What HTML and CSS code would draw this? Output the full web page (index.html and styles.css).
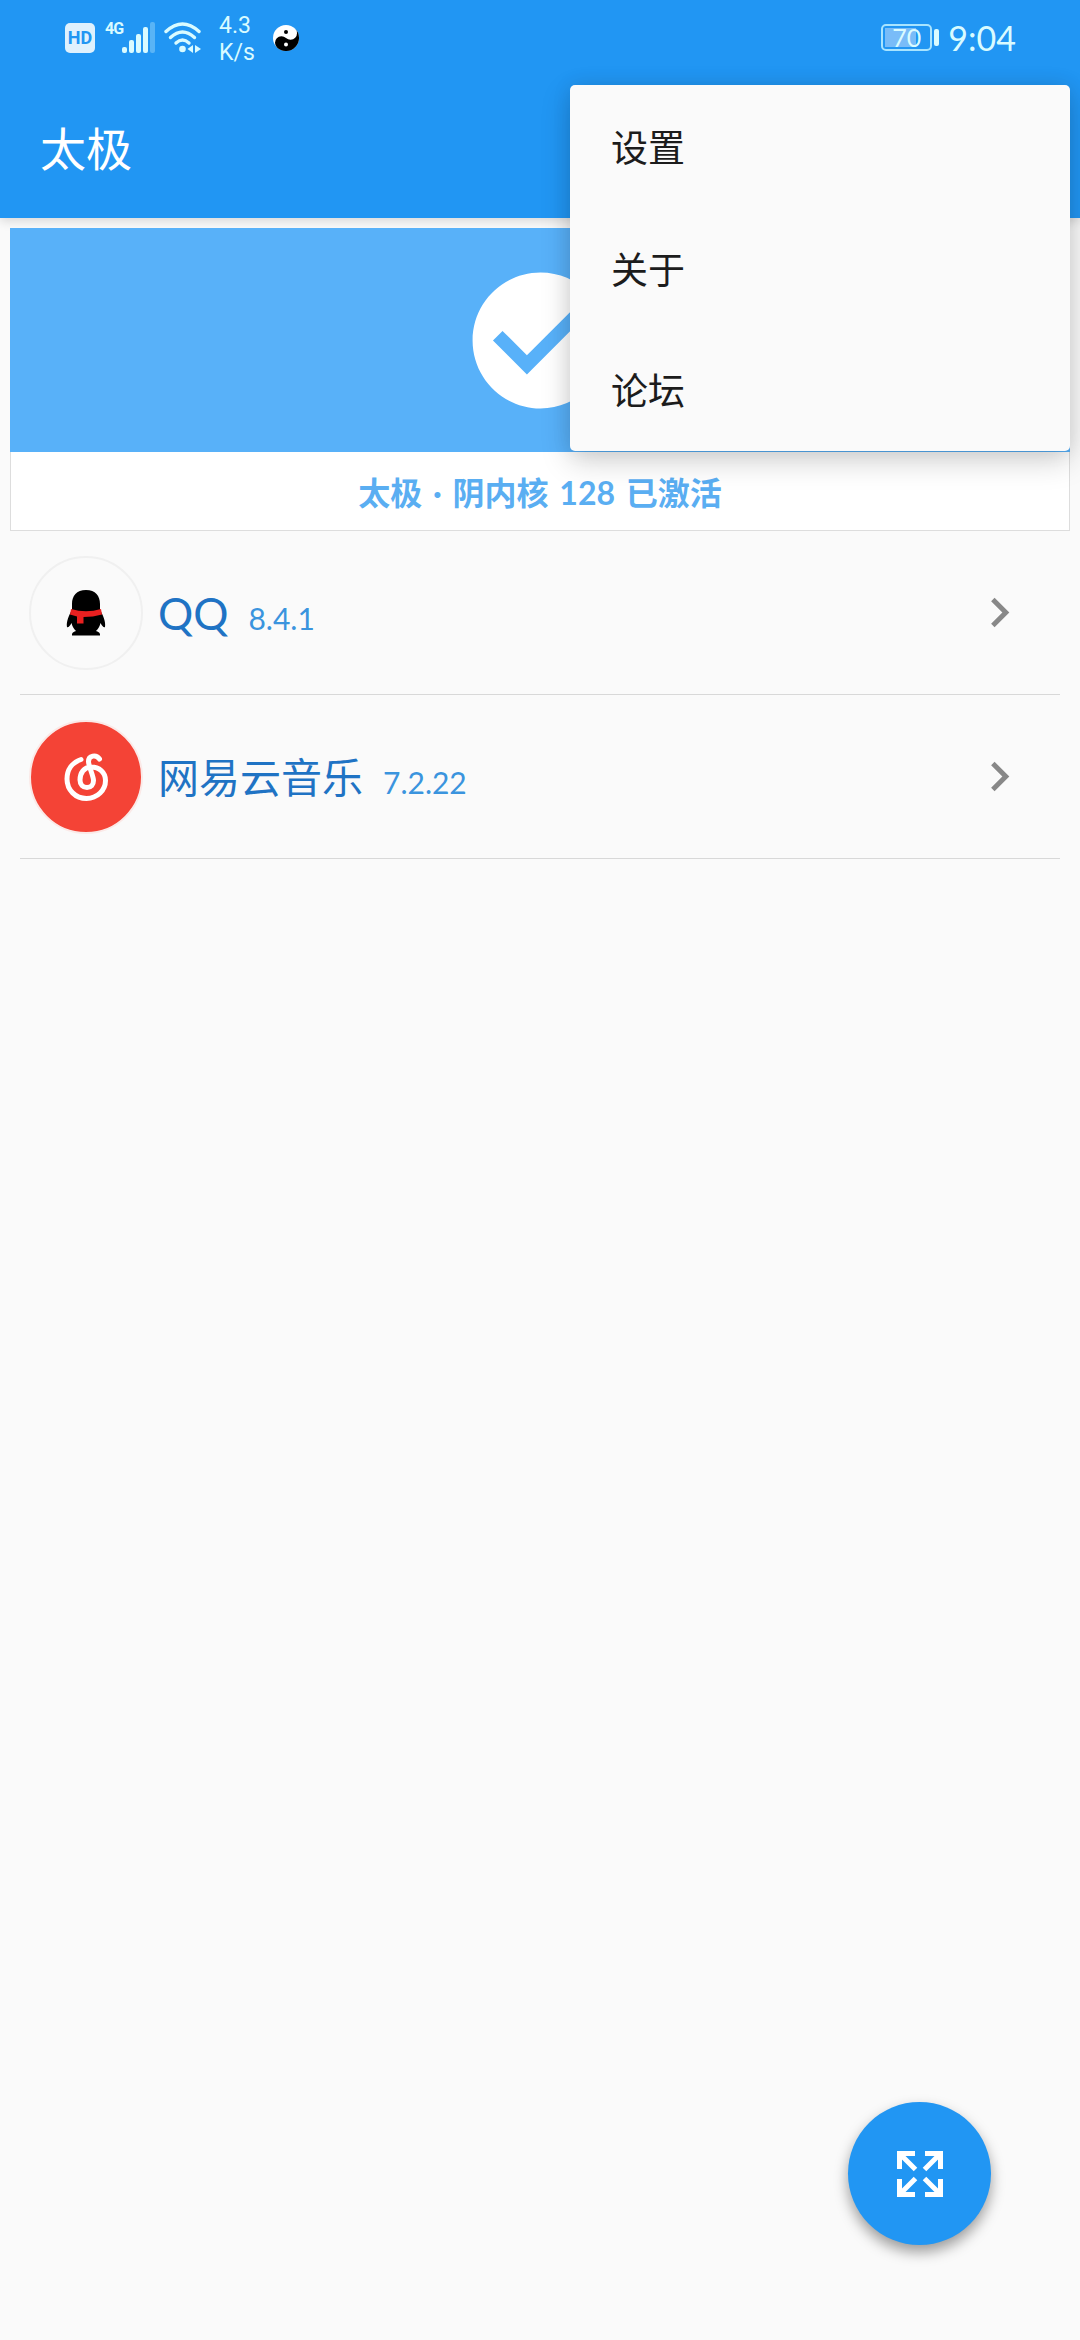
FILE: index.html
```html
<!DOCTYPE html>
<html lang="zh-CN">
  <head>
    <meta charset="utf-8" />
    <title>太极</title>
    <link rel="stylesheet" href="styles.css">
  </head>

  <body>
    <header class="header">
      <div class="statusbar">
        <span class="hd">HD</span>
        <span class="net">4G</span>
        <svg class="signal" width="34" height="32" viewBox="0 0 34 32" fill="#d9fbff">
          <rect x="0" y="25" width="5" height="6" rx="2" />
          <rect x="7" y="18" width="5" height="13" rx="2" />
          <rect x="14" y="12" width="5" height="19" rx="2" />
          <rect x="21" y="5" width="5" height="26" rx="2" />
          <rect x="28" y="0" width="5" height="31" rx="2" opacity="0.3" />
        </svg>
        <svg class="wifi" width="38" height="32" viewBox="0 0 38 32" fill="none" stroke="#d9fbff" stroke-width="3.4" stroke-linecap="round">
          <path d="M2 9.500Q18.500 -5.500 35 9.500" />
          <path d="M6.500 15.500Q18.500 4.500 30.500 15.500" />
          <path d="M12 21Q18.500 15 25 21" />
          <circle cx="18.500" cy="27" r="3.300" fill="#d9fbff" stroke="none" />
          <path d="M29 23v8l-5.500-4zM31 23v8l6-4z" fill="#d9fbff" stroke="none" />
        </svg>
        <span class="speed">4.3<br />K/s</span>
        <svg class="taiji" width="26" height="26" viewBox="0 0 26 26">
          <circle cx="13" cy="13" r="13" fill="#fff" />
          <path d="M22 3.600A13 13 0 0 1 4 22.400A6.500 6.500 0 0 1 13 13A6.500 6.500 0 0 0 22 3.600z" fill="#000" />
          <circle cx="13" cy="7" r="2" fill="#000" />
          <circle cx="13" cy="19.500" r="2" fill="#fff" />
        </svg>
        <span class="battery"><span class="battery-text">70</span></span>
        <span class="battery-cap"></span>
        <span class="clock">9:04</span>
      </div>
      <h1 class="title">太极</h1>
    </header>

    <main class="content">
      <section class="card">
        <div class="card-banner">
          <svg width="163" height="163" viewBox="0 0 24 24" fill="#fff">
            <path d="M12 2C6.480 2 2 6.480 2 12s4.480 10 10 10 10-4.480 10-10S17.520 2 12 2zm-2 15l-5-5 1.410-1.410L10 14.170l7.590-7.590L19 8l-9 9z" />
          </svg>
        </div>
        <div class="card-text">太极 · 阴内核 128 已激活</div>
      </section>

      <ul class="apps">
        <li class="app">
          <span class="app-icon">
            <svg width="40" height="46" viewBox="0 0 40 46">
              <path d="M20 0C10.500 0 6 6 6 14V20C3 25 0 32 1 37C2 38 4 36 5.500 33C6.500 37 8 39 10 41C7 42 5.500 43 6 45.500H34C34.500 43 33 42 30 41C32 39 33.500 37 34.500 33C36 36 38 38 39 37C40 32 37 25 34 20V14C34 6 29.500 0 20 0z" />
              <path d="M5 19Q20 23.500 35 19L36 24.500Q27 27 17.500 27V33.500H11V26.500L4 24.500z" fill="#e92020" />
            </svg>
          </span>
          <span class="app-name app-name-latin">QQ</span>
          <span class="app-version">8.4.1</span>
          <svg class="chevron" width="59" height="59" viewBox="0 0 24 24">
            <path d="M10 6L8.590 7.410 13.170 12l-4.580 4.590L10 18l6-6z" />
          </svg>
        </li>
        <li class="app">
          <span class="app-icon app-icon-red">
            <svg width="44" height="48" viewBox="0 0 44 48" fill="none" stroke="#fff" stroke-width="5" stroke-linecap="round">
              <path d="M17 6.500C8 9.500 3 17 3 26C3 37 11.500 45.500 22.500 45.500C33.500 45.500 41.500 37 41.500 27.500C41.500 19 35 14 27 14C20 14 16 20 16 27C16 31.500 19 34.500 23 34.500C27 34.500 29.500 31.500 29.500 27.500C29.500 23 24.500 13 24.500 8.500C24.500 2.500 32 1 35.500 6" />
            </svg>
          </span>
          <span class="app-name">网易云音乐</span>
          <span class="app-version">7.2.22</span>
          <svg class="chevron" width="59" height="59" viewBox="0 0 24 24">
            <path d="M10 6L8.590 7.410 13.170 12l-4.580 4.590L10 18l6-6z" />
          </svg>
        </li>
      </ul>
    </main>

    <nav class="menu">
      <a class="menu-item">设置</a>
      <a class="menu-item">关于</a>
      <a class="menu-item">论坛</a>
    </nav>

    <button class="fab">
      <svg width="46" height="46" viewBox="0 0 46 46" fill="none" stroke="#fff" stroke-width="5">
        <path d="M18 2.500H2.500V18M2.500 2.500L18.500 18.500" />
        <path d="M28 2.500H43.500V18M43.500 2.500L27.500 18.500" />
        <path d="M18 43.500H2.500V28M2.500 43.500L18.500 27.500" />
        <path d="M28 43.500H43.500V28M43.500 43.500L27.500 27.500" />
      </svg>
    </button>
  </body>
</html>
```
FILE: styles.css
```css
* {
  box-sizing: border-box;
}

body {
  margin: 0;
  height: 2340px;
  position: relative;
  overflow: hidden;
  background-color: #fafafa;
  font-family: Lato, 'Noto Sans CJK SC', sans-serif;
}

.header {
  height: 218px;
  background-color: #2196f3;
  box-shadow: 0 3px 10px rgba(0, 0, 0, 0.14);
}

.statusbar {
  height: 75px;
  padding: 0 64px 0 65px;
  display: flex;
  align-items: center;
  color: #d9fbff;
}

.hd {
  width: 30px;
  height: 30px;
  border-radius: 5px;
  background-color: #dff1fd;
  color: #2196f3;
  font: bold 18px/30px Roboto, sans-serif;
  text-align: center;
}

.net {
  width: 17px;
  height: 30px;
  margin-left: 10px;
  font: bold 16px/12px Roboto, sans-serif;
  letter-spacing: -1px;
}

.wifi {
  margin-left: 8px;
}

.speed {
  width: 36px;
  margin-left: 17px;
  padding-top: 2px;
  font: 23px/27px Roboto, sans-serif;
}

.taiji {
  margin-left: 18px;
}

.battery {
  width: 51px;
  height: 27px;
  margin-left: auto;
  border: 2px solid #a8e4ff;
  border-radius: 5px;
  background: linear-gradient(#79bcf8, #79bcf8) 2px 2px / 31px 19px no-repeat;
}

.battery-text {
  display: block;
  font-size: 25px;
  line-height: 22px;
  text-align: center;
}

.battery-cap {
  width: 5px;
  height: 17px;
  margin-left: 2px;
  border-radius: 2px;
  background-color: #d9fbff;
}

.clock {
  margin-left: 9px;
  font-size: 34px;
}

.title {
  margin: 0;
  padding-left: 40px;
  color: #fff;
  font-size: 46px;
  font-weight: normal;
  line-height: 147px;
}

.content {
  padding: 10px;
}

.card-banner {
  height: 224px;
  display: flex;
  align-items: center;
  justify-content: center;
  background-color: #58b1f9;
}

.card-text {
  height: 79px;
  border: 1px solid #ddd;
  border-top: 0;
  background-color: #fff;
  color: #5aaef2;
  font-size: 32px;
  font-weight: bold;
  line-height: 82px;
  text-align: center;
  word-spacing: 3px;
}

.apps {
  margin: 0;
  padding: 0 10px;
  list-style: none;
}

.app {
  height: 164px;
  padding: 0 31px 0 9px;
  display: flex;
  align-items: center;
  border-bottom: 1px solid #d8d8d8;
}

.app-icon {
  width: 114px;
  height: 114px;
  margin-right: 15px;
  display: flex;
  align-items: center;
  justify-content: center;
  border: 2px solid #f0f0f0;
  border-radius: 50%;
}

.app-icon-red {
  background-color: #f44336;
  border-color: #fbe9e7;
}

.app-name {
  padding-bottom: 4px;
  color: #1f73c4;
  font-size: 41px;
}

.app-name-latin {
  padding-bottom: 0;
  font-size: 44px;
}

.app-version {
  margin-left: 20px;
  padding-top: 10px;
  color: #3a94de;
  font-size: 30px;
}

.chevron {
  margin-left: auto;
  fill: #888;
}

.menu {
  width: 500px;
  padding-top: 2px;
  position: absolute;
  top: 85px;
  right: 10px;
  border-radius: 5px;
  background-color: #fafafa;
  box-shadow: 0 10px 30px rgba(0, 0, 0, 0.18), 0 0 20px rgba(0, 0, 0, 0.08);
}

.menu-item {
  display: block;
  padding-left: 41px;
  color: #1c1c1c;
  font-size: 37px;
  line-height: 122px;
}

.menu-item:last-child {
  line-height: 120px;
}

.fab {
  width: 143px;
  height: 143px;
  padding: 0;
  position: absolute;
  right: 89px;
  bottom: 95px;
  display: flex;
  align-items: center;
  justify-content: center;
  border: 0;
  border-radius: 50%;
  background-color: #2196f3;
  box-shadow: 0 7px 14px rgba(0, 0, 0, 0.38);
}
```
